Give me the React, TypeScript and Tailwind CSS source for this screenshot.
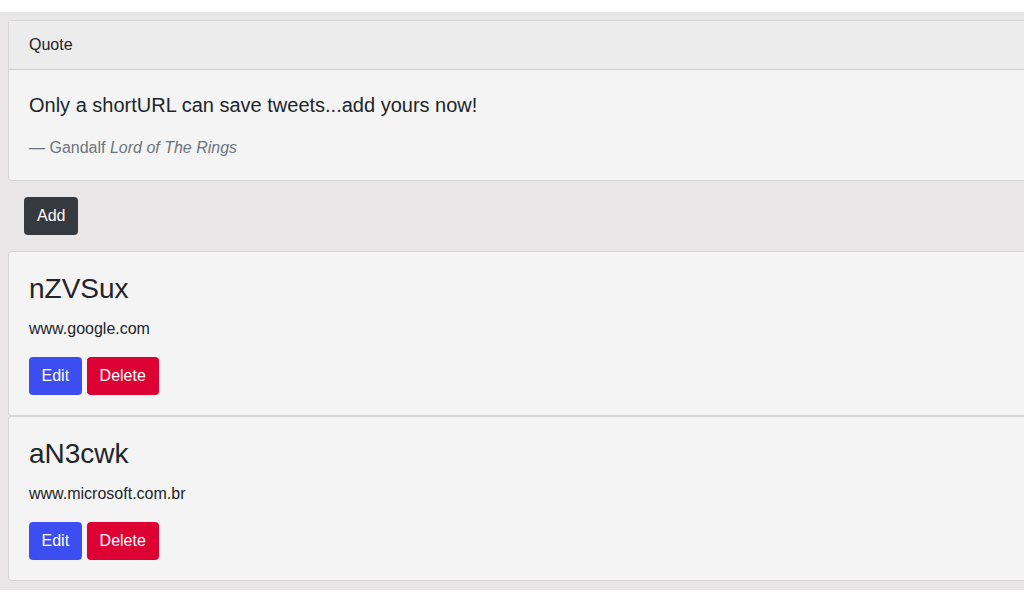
import React from "react";

const font = { fontFamily: '"Liberation Sans", Arial, sans-serif' };

function LinkCard({ code, url }: { code: string; url: string }) {
  return (
    <div className="rounded-[4px] border border-[rgba(0,0,0,0.125)] bg-[#f4f4f4] p-5">
      <h3 className="mb-3 text-[28px] leading-[33px] font-normal text-[#212529]">{code}</h3>
      <p className="mb-4 text-[16px] leading-6 text-[#212529]">{url}</p>
      <div className="flex">
        <button className="h-[38px] rounded-[4px] bg-[#3c4df2] px-[12.5px] text-[16px] leading-6 text-white">
          Edit
        </button>
        <button className="ml-[5px] h-[38px] rounded-[4px] bg-[#dc0033] px-[13px] text-[16px] leading-6 text-white">
          Delete
        </button>
      </div>
    </div>
  );
}

export default function App() {
  return (
    <div className="w-full overflow-hidden bg-white pt-3 text-[#212529]" style={font}>
      <div className="bg-[#e8e6e7] pl-2 pt-2 pb-[9px]">
        <div className="mr-[-20px] flex flex-col">
          <div className="rounded-[4px] border border-[rgba(0,0,0,0.125)] bg-[#f4f4f4]">
            <div className="border-b border-[rgba(0,0,0,0.125)] bg-[#ececec] px-5 py-3 text-[16px] leading-6">
              Quote
            </div>
            <div className="p-5">
              <p className="mb-4 text-[20px] leading-[30px]">
                Only a shortURL can save tweets...add yours now!
              </p>
              <div className="text-[16px] leading-6 text-[#6c757d]">
                — Gandalf <cite className="italic">Lord of The Rings</cite>
              </div>
            </div>
          </div>
          <div className="p-4">
            <button className="h-[38px] rounded-[4px] bg-[#343a40] px-[13px] text-[16px] leading-6 text-white">
              Add
            </button>
          </div>
          <LinkCard code="nZVSux" url="www.google.com" />
          <LinkCard code="aN3cwk" url="www.microsoft.com.br" />
        </div>
      </div>
    </div>
  );
}
